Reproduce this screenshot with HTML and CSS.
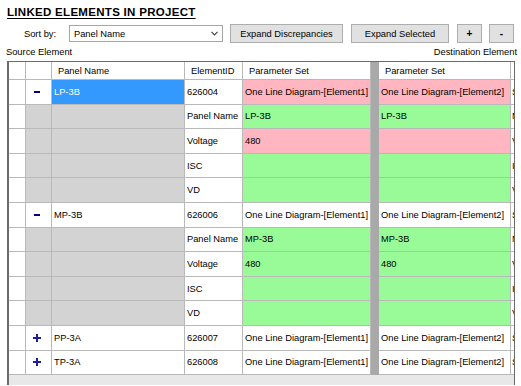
FILE: index.html
```html
<!DOCTYPE html>
<html>
<head>
<meta charset="utf-8">
<link rel="stylesheet" href="styles.css">
</head>
<body>
<div class="title">LINKED ELEMENTS IN PROJECT</div>
<div class="toolbar">
  <span class="sortlabel">Sort by:</span>
  <div class="select"><span>Panel Name</span><svg class="chev" width="7" height="5" viewBox="0 0 7 5"><polyline points="0.5,0.8 3.5,3.8 6.5,0.8" fill="none" stroke="#444" stroke-width="1.2"/></svg></div>
  <button class="btn b1">Expand Discrepancies</button>
  <button class="btn b2">Expand Selected</button>
  <button class="btn b3 sym">+</button>
  <button class="btn b4 sym">-</button>
</div>
<div class="sides"><span>Source Element</span><span>Destination Element</span></div>
<div class="gridwrap">
  <div class="grid">
    <div class="c rh"></div><div class="c"></div><div class="c hd">Panel Name</div><div class="c hd">ElementID</div><div class="c hd">Parameter Set</div><div class="sep"></div><div class="c hd">Parameter Set</div><div class="c part"></div>

    <div class="c rh"></div><div class="c exp"><svg width="6" height="2"><rect width="6" height="2" fill="#000080"/></svg></div><div class="c sel">LP-3B</div><div class="c">626004</div><div class="c pink">One Line Diagram-[Element1]</div><div class="sep"></div><div class="c pink">One Line Diagram-[Element2]</div><div class="c part">S</div>

    <div class="c rh"></div><div class="c gray"></div><div class="c gray"></div><div class="c">Panel Name</div><div class="c green">LP-3B</div><div class="sep"></div><div class="c green">LP-3B</div><div class="c part">N</div>
    <div class="c rh"></div><div class="c gray"></div><div class="c gray"></div><div class="c">Voltage</div><div class="c pink">480</div><div class="sep"></div><div class="c pink"></div><div class="c part">V</div>
    <div class="c rh"></div><div class="c gray"></div><div class="c gray"></div><div class="c">ISC</div><div class="c green"></div><div class="sep"></div><div class="c green"></div><div class="c part">I</div>
    <div class="c rh"></div><div class="c gray"></div><div class="c gray"></div><div class="c">VD</div><div class="c green"></div><div class="sep"></div><div class="c green"></div><div class="c part">V</div>

    <div class="c rh"></div><div class="c exp"><svg width="6" height="2"><rect width="6" height="2" fill="#000080"/></svg></div><div class="c">MP-3B</div><div class="c">626006</div><div class="c">One Line Diagram-[Element1]</div><div class="sep"></div><div class="c">One Line Diagram-[Element2]</div><div class="c part">S</div>

    <div class="c rh"></div><div class="c gray"></div><div class="c gray"></div><div class="c">Panel Name</div><div class="c green">MP-3B</div><div class="sep"></div><div class="c green">MP-3B</div><div class="c part">N</div>
    <div class="c rh"></div><div class="c gray"></div><div class="c gray"></div><div class="c">Voltage</div><div class="c green">480</div><div class="sep"></div><div class="c green">480</div><div class="c part">V</div>
    <div class="c rh"></div><div class="c gray"></div><div class="c gray"></div><div class="c">ISC</div><div class="c green"></div><div class="sep"></div><div class="c green"></div><div class="c part">I</div>
    <div class="c rh"></div><div class="c gray"></div><div class="c gray"></div><div class="c">VD</div><div class="c green"></div><div class="sep"></div><div class="c green"></div><div class="c part">V</div>

    <div class="c rh"></div><div class="c exp plus"><svg width="8" height="8"><rect x="3" y="0" width="2" height="8" fill="#1c1c9c"/><rect x="0" y="3" width="8" height="2" fill="#1c1c9c"/></svg></div><div class="c">PP-3A</div><div class="c">626007</div><div class="c">One Line Diagram-[Element1]</div><div class="sep"></div><div class="c">One Line Diagram-[Element2]</div><div class="c part">S</div>
    <div class="c rh"></div><div class="c exp plus"><svg width="8" height="8"><rect x="3" y="0" width="2" height="8" fill="#1c1c9c"/><rect x="0" y="3" width="8" height="2" fill="#1c1c9c"/></svg></div><div class="c">TP-3A</div><div class="c">626008</div><div class="c">One Line Diagram-[Element1]</div><div class="sep"></div><div class="c">One Line Diagram-[Element2]</div><div class="c part">S</div>
  </div>
  <div class="bottom"></div>
</div>
</body>
</html>
```
FILE: styles.css
```css
html, body {
  margin: 0;
  padding: 0;
  background: #ffffff;
}
body {
  font-family: "Liberation Sans", Arial, sans-serif;
  font-size: 9.3px;
  color: #000;
  width: 521px;
  height: 386px;
  overflow: hidden;
}
.title {
  margin-top: 5px;
  padding-left: 7px;
  font-size: 11.5px;
  font-weight: bold;
  letter-spacing: 0.3px;
  line-height: 14px;
  height: 14px;
  text-decoration: underline;
  text-decoration-thickness: 1px;
  text-underline-offset: 1.5px;
}
.toolbar {
  margin-top: 5px;
  height: 19px;
  display: flex;
  align-items: center;
}
.sortlabel {
  padding-left: 24px;
  width: 45px;
  box-sizing: content-box;
}
.select {
  width: 154px;
  height: 17px;
  box-sizing: border-box;
  border: 1px solid #a6a6a6;
  display: flex;
  align-items: center;
  justify-content: space-between;
  padding: 0 4px 0 4px;
  background: #fff;
}
.chev {
  display: block;
}
.btn {
  height: 19px;
  box-sizing: border-box;
  border: 1px solid #adadad;
  background: #e1e1e1;
  font-family: "Liberation Sans", Arial, sans-serif;
  font-size: 9.3px;
  color: #000;
  padding: 0;
  margin: 0;
}
.b1 { margin-left: 7px; width: 113px; }
.b2 { margin-left: 8px; width: 98px; }
.b3 { margin-left: 8px; width: 25px; }
.b4 { margin-left: 7px; width: 25px; }
.sym { font-weight: bold; font-size: 10px; }
.sides {
  margin-top: 4px;
  height: 11px;
  line-height: 11px;
  display: flex;
  justify-content: space-between;
  padding: 0 4px 0 6px;
}
.gridwrap {
  margin-top: 3px;
  margin-left: 7px;
  width: 508px;
  box-sizing: border-box;
  border-left: 2px solid #6b6b6b;
  border-right: 1px solid #6b6b6b;
  border-top: 1px solid #6b6b6b;
  background: #e8e8e8;
}
.grid {
  display: grid;
  grid-template-columns: 17px 26px 133px 58px 128px 8px 132px 3px;
  grid-template-rows: 18px repeat(12, 24.6px);
}
.c {
  box-sizing: border-box;
  border-right: 1px solid #b9b9b9;
  border-bottom: 1px solid #b9b9b9;
  background: #fff;
  display: flex;
  align-items: center;
  padding-left: 2px;
  white-space: nowrap;
  overflow: hidden;
}
.hd {
  padding-left: 6px;
}
.rh {
  background: #fff;
}
.exp {
  justify-content: center;
  padding-left: 0;
  padding-right: 3px;
}
.exp svg { display: block; }
.plus { padding-right: 4px; }
.gray { background: #d3d3d3; }
.sel { background: #3399ff; color: #fff; }
.pink { background: #ffb6c1; }
.green { background: #98fb98; }
.sep { background: #a9a9a9; }
.part {
  border-right: none;
  padding-left: 1px;
}
.bottom {
  height: 10px;
  background: #e8e8e8;
}
```
